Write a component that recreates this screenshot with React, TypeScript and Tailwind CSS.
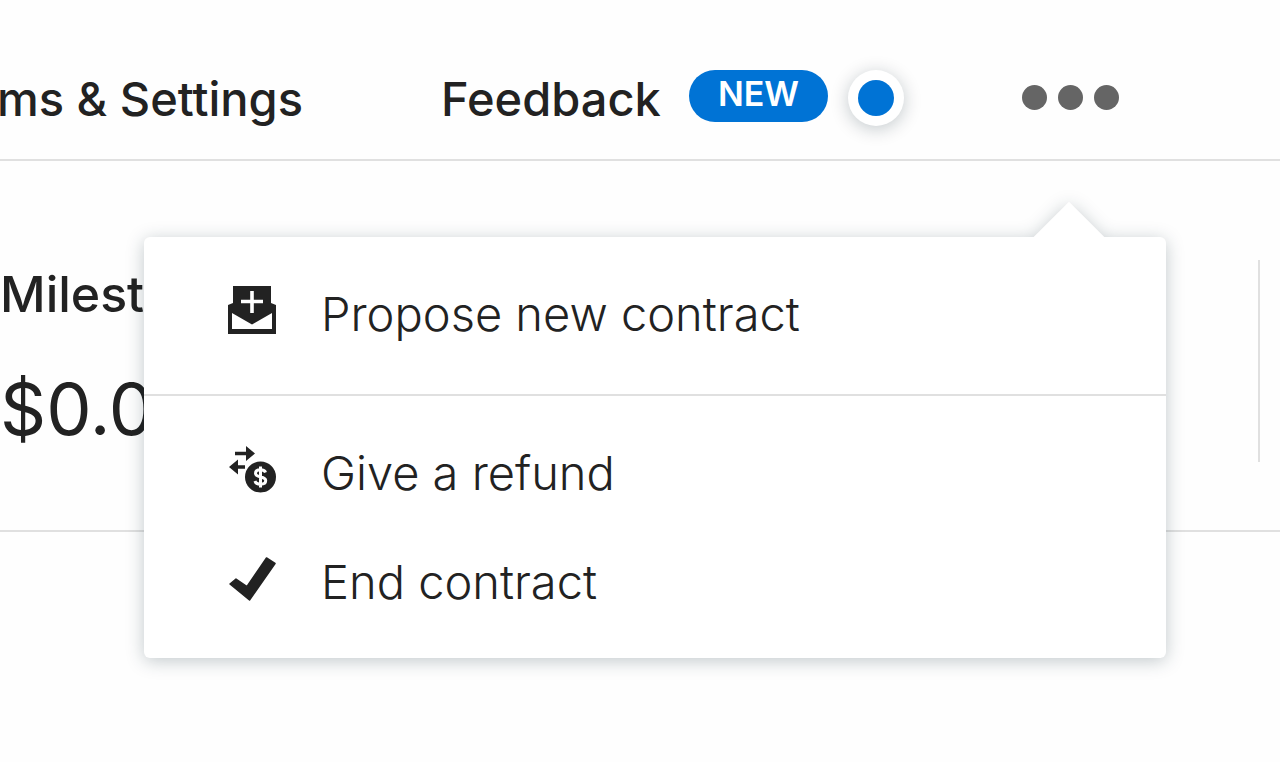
import type { ReactNode } from "react";

function ProposeIcon() {
  return (
    <svg viewBox="0 0 48 48" className="mb-2 size-12" aria-hidden="true">
      <path
        fillRule="evenodd"
        fill="#222"
        d="M5 0h38v17l5 2v29H0V19l5-2zM4 27v16h40V27L24 38.500z"
      />
      <path d="M24 5v22M13 15.500h22" stroke="#fff" strokeWidth="3.600" fill="none" />
    </svg>
  );
}

function RefundIcon() {
  return (
    <svg viewBox="0 0 48 48" className="mb-2 size-12" aria-hidden="true">
      <path d="M7 8.500h14M8 22h9" stroke="#222" strokeWidth="3.600" fill="none" />
      <path d="M18 1l9 7.500-9 7.500zM10 14.500v15L1 22z" fill="#222" />
      <circle cx="32.500" cy="32" r="15.500" fill="#222" />
      <path
        d="M37.500 27.500c-.6-2-2.500-2.700-5-2.700-3 0-5 1.300-5 3.500 0 5 10.200 2.400 10.200 7.200 0 2.400-2.200 3.700-5.200 3.700-2.800 0-4.900-1-5.500-3.200M32.500 21.500v21"
        stroke="#fff"
        strokeWidth="3"
        fill="none"
      />
    </svg>
  );
}

function CheckIcon() {
  return (
    <svg viewBox="0 0 48 48" className="mb-2 size-12" aria-hidden="true">
      <path
        d="M2 30L8 25l11 7.500L38.500 4l8.500 5.500L21.500 46z"
        fill="#222"
        stroke="#222"
        strokeWidth="1.500"
        strokeLinejoin="round"
      />
    </svg>
  );
}

function MenuItem({ icon, label }: { icon: ReactNode; label: string }) {
  return (
    <li>
      <button
        type="button"
        className="flex h-[109px] w-full items-center gap-[45px] pl-[84px] text-left text-[47px] font-light leading-none whitespace-nowrap text-[#222]"
      >
        {icon}
        {label}
      </button>
    </li>
  );
}

export default function App() {
  return (
    <div className="relative min-h-screen overflow-hidden bg-[#fefefe] font-['Inter','Liberation_Sans',sans-serif] text-[#222]">
      <header className="flex h-[161px] items-center border-b-2 border-[#e0e0e0] pt-9 pr-[161px] text-[47px] font-medium leading-none whitespace-nowrap">
        <nav className="flex items-center gap-[138px]">
          <a href="#settings" className="flex w-[303px] justify-end pt-0.5">
            ms &amp; Settings
          </a>
          <a href="#feedback" className="flex items-center gap-5">
            <span className="w-[228px] pt-0.5">Feedback</span>
            <span className="mb-1 flex h-[52px] w-[139px] items-center justify-center rounded-full bg-[#0073d5] pb-1 text-[34px] font-semibold text-white">
              NEW
            </span>
            <span className="grid size-14 place-items-center rounded-full bg-white shadow-[0_3px_18px_rgba(0,30,40,0.24)]">
              <span className="size-9 rounded-full bg-[#0073d5]" />
            </span>
          </a>
        </nav>
        <button type="button" aria-label="More options" className="ml-auto flex gap-[11px]">
          <span className="size-[25px] rounded-full bg-[#656565]" />
          <span className="size-[25px] rounded-full bg-[#656565]" />
          <span className="size-[25px] rounded-full bg-[#656565]" />
        </button>
      </header>

      <section className="flex h-[371px] items-start justify-between border-b-2 border-[#e0e0e0] pt-[99px] pr-5">
        <div className="whitespace-nowrap">
          <p className="text-[50px] font-medium leading-[68px]">Milest</p>
          <p className="mt-9 text-[72px] leading-[90px]">$0.0</p>
        </div>
        <div className="h-[202px] w-0.5 bg-[#e0e0e0]" />
      </section>

      <div className="absolute top-[237px] right-[114px] left-36 drop-shadow-[0_3px_9px_rgba(0,30,40,0.24)]">
        <span className="absolute -top-[25px] right-[72px] size-[50px] rotate-45 bg-white" />
        <div className="relative rounded-md bg-white">
          <ul className="border-b-2 border-[#e0e0e0] pt-[22px] pb-[26px]">
            <MenuItem icon={<ProposeIcon />} label="Propose new contract" />
          </ul>
          <ul className="py-[22px]">
            <MenuItem icon={<RefundIcon />} label="Give a refund" />
            <MenuItem icon={<CheckIcon />} label="End contract" />
          </ul>
        </div>
      </div>
    </div>
  );
}
